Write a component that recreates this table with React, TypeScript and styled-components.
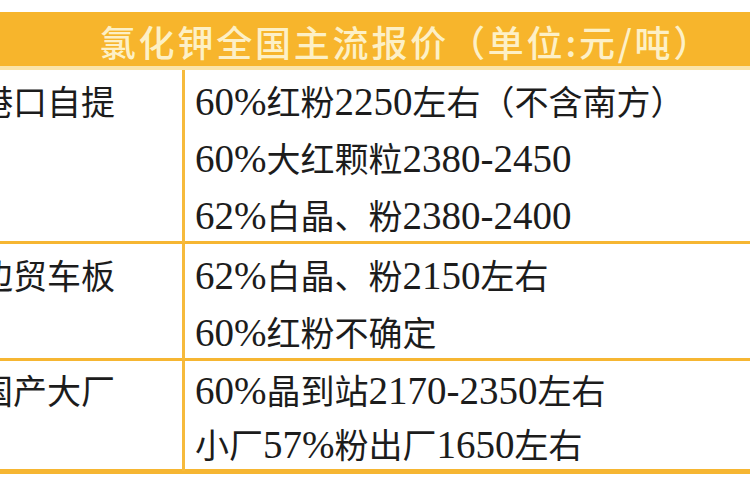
import React from "react";
import styled, { createGlobalStyle } from "styled-components";

const GlobalStyle = createGlobalStyle`
  html, body {
    margin: 0;
    padding: 0;
    background: #ffffff;
  }
  body {
    overflow: hidden;
  }
`;

const Page = styled.div`
  width: 750px;
  height: 500px;
  overflow: hidden;
  padding-top: 12px;
  box-sizing: border-box;
  background: #ffffff;
`;

const Table = styled.div`
  margin-left: -40px;
  width: 874px;
  display: flex;
  flex-direction: column;
`;

const Header = styled.div`
  height: 58px;
  box-sizing: border-box;
  padding-top: 4px;
  padding-left: 18px;
  background: #f7b52c;
  border-bottom: 4px solid #fbe4a8;
  display: flex;
  align-items: center;
  justify-content: center;
  color: #fdf0c6;
  font-family: "Noto Sans CJK SC", "Noto Sans", sans-serif;
  font-size: 36px;
  font-weight: 500;
  letter-spacing: 2.8px;
  white-space: nowrap;
`;

const Row = styled.div<{ $border: number; $height: number }>`
  display: grid;
  grid-template-columns: 225px 1fr;
  height: ${(p) => p.$height + p.$border}px;
  box-sizing: border-box;
  border-bottom: ${(p) => p.$border}px solid #f6b632;
`;

const LeftCell = styled.div<{ $lh: number }>`
  box-sizing: border-box;
  padding-left: 19px;
  padding-top: 2px;
  border-right: 3px solid #f6ba3c;
  font-family: "Noto Sans CJK SC", sans-serif;
  font-size: 34px;
  line-height: ${(p) => p.$lh}px;
  color: #1c1c1c;
  white-space: nowrap;
`;

const RightCell = styled.div`
  padding-left: 10px;
  padding-top: 2px;
  display: flex;
  flex-direction: column;
`;

const Line = styled.div<{ $lh: number }>`
  font-family: "Noto Sans CJK SC", sans-serif;
  font-size: 34px;
  line-height: ${(p) => p.$lh}px;
  height: ${(p) => p.$lh}px;
  flex-shrink: 0;
  color: #1c1c1c;
  white-space: nowrap;
`;

const Latin = styled.span`
  font-family: "Liberation Serif", serif;
  font-size: 39px;
`;

const rows = [
  {
    label: "港口自提",
    lh: 57,
    border: 3,
    lines: [
      "60%红粉2250左右（不含南方）",
      "60%大红颗粒2380-2450",
      "62%白晶、粉2380-2400",
    ],
  },
  {
    label: "边贸车板",
    lh: 57,
    border: 3,
    lines: ["62%白晶、粉2150左右", "60%红粉不确定"],
  },
  {
    label: "国产大厂",
    lh: 54,
    border: 5,
    lines: ["60%晶到站2170-2350左右", "小厂57%粉出厂1650左右"],
  },
];

function renderText(text: string) {
  return text
    .split(/([\x00-\x7F]+)/)
    .filter((s) => s.length > 0)
    .map((seg, i) =>
      /^[\x00-\x7F]+$/.test(seg) ? <Latin key={i}>{seg}</Latin> : <span key={i}>{seg}</span>
    );
}

export default function App() {
  return (
    <>
      <GlobalStyle />
      <Page>
        <Table>
          <Header>氯化钾全国主流报价（单位:元/吨）</Header>
          {rows.map((r) => (
            <Row key={r.label} $border={r.border} $height={r.lh * r.lines.length}>
              <LeftCell $lh={r.lh}>{r.label}</LeftCell>
              <RightCell>
                {r.lines.map((l) => (
                  <Line key={l} $lh={r.lh}>
                    {renderText(l)}
                  </Line>
                ))}
              </RightCell>
            </Row>
          ))}
        </Table>
      </Page>
    </>
  );
}
